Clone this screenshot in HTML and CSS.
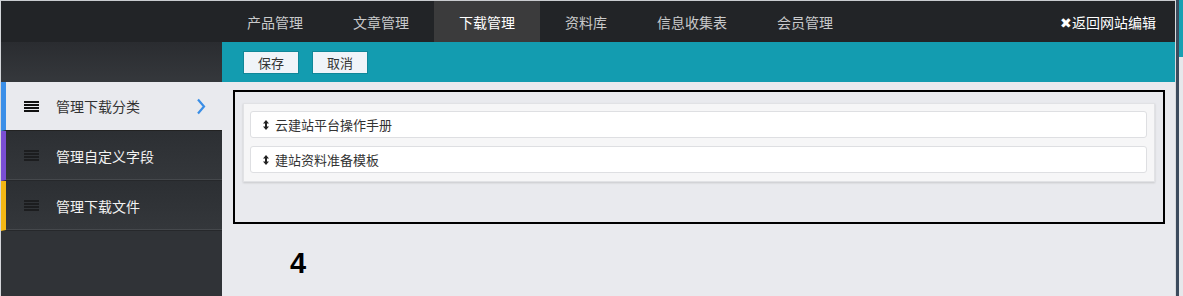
FILE: index.html
```html
<!DOCTYPE html>
<html lang="zh-CN">
<head>
    <meta charset="UTF-8">
    <title>下载管理</title>
    <link rel="stylesheet" href="styles.css">
</head>
<body>
    <div class="screen">
        <div class="page">
            <header class="topbar">
                <ul class="nav-links">
                    <li><a href="#">产品管理</a></li>
                    <li><a href="#">文章管理</a></li>
                    <li class="active"><a href="#">下载管理</a></li>
                    <li><a href="#">资料库</a></li>
                    <li><a href="#">信息收集表</a></li>
                    <li><a href="#">会员管理</a></li>
                </ul>
                <a class="back-link" href="#">✖返回网站编辑</a>
            </header>

            <div class="body-row">
                <aside class="sidebar">
                    <div class="sidebar-top"></div>
                    <ul class="side-menu">
                        <li class="side-item current blue">
                            <span class="list-icon"><i></i><i></i><i></i><i></i></span>
                            <span class="side-text">管理下载分类</span>
                            <svg class="chevron" width="10" height="17" viewBox="0 0 10 17">
                                <path d="M2 1.5 L8 8.5 L2 15.5" fill="none" stroke="#3a8ee6" stroke-width="2.2"/>
                            </svg>
                        </li>
                        <li class="side-item purple">
                            <span class="list-icon"><i></i><i></i><i></i><i></i></span>
                            <span class="side-text">管理自定义字段</span>
                        </li>
                        <li class="side-item yellow">
                            <span class="list-icon"><i></i><i></i><i></i><i></i></span>
                            <span class="side-text">管理下载文件</span>
                        </li>
                    </ul>
                </aside>

                <main class="main">
                    <div class="toolbar">
                        <button class="btn">保存</button>
                        <button class="btn">取消</button>
                    </div>
                    <div class="content">
                        <div class="outline-box">
                            <div class="sort-panel">
                                <div class="sort-row">
                                    <svg class="sort-icon" width="6" height="10" viewBox="0 0 6 10">
                                        <path d="M3 0 L6 3.5 L4 3.5 L4 6.5 L6 6.5 L3 10 L0 6.5 L2 6.5 L2 3.5 L0 3.5 Z" fill="#222"/>
                                    </svg>
                                    云建站平台操作手册
                                </div>
                                <div class="sort-row">
                                    <svg class="sort-icon" width="6" height="10" viewBox="0 0 6 10">
                                        <path d="M3 0 L6 3.5 L4 3.5 L4 6.5 L6 6.5 L3 10 L0 6.5 L2 6.5 L2 3.5 L0 3.5 Z" fill="#222"/>
                                    </svg>
                                    建站资料准备模板
                                </div>
                            </div>
                        </div>
                        <div class="step-num">4</div>
                    </div>
                </main>
            </div>
        </div>

        <div class="edge">
            <div class="edge-line"></div>
            <div class="edge-bar"></div>
            <div class="edge-side">
                <div class="edge-teal"></div>
            </div>
        </div>
    </div>
</body>
</html>
```

FILE: styles.css
```css
html, body {
    margin: 0;
    height: 100%;
}
body {
    font-family: "Noto Sans CJK SC", "Liberation Sans", sans-serif;
    background-color: #e9eaee;
    overflow: hidden;
}
.screen {
    display: flex;
    height: 296px;
}
.page {
    width: 1174px;
    display: flex;
    flex-direction: column;
    border-left: 1px solid #d4d6da;
    border-top: 1px solid #c9cbcf;
    background: #e9eaee;
}
.topbar {
    height: 41px;
    background: #222427;
    display: flex;
    align-items: stretch;
    justify-content: space-between;
}
.nav-links {
    list-style: none;
    margin: 0 0 0 221px;
    padding: 0;
    display: flex;
}
.nav-links li {
    display: flex;
    align-items: center;
    padding: 0 25px;
}
.nav-links a {
    text-decoration: none;
    color: #c9cacb;
    font-size: 14px;
}
.nav-links li.active {
    background: #3b3b3c;
}
.nav-links li.active a {
    color: #fff;
}
.back-link {
    align-self: center;
    margin-right: 19px;
    color: #fff;
    font-size: 14px;
    text-decoration: none;
}
.body-row {
    flex: 1;
    display: flex;
}
.sidebar {
    width: 221px;
    background: #303337;
    display: flex;
    flex-direction: column;
}
.sidebar-top {
    height: 40px;
    background: linear-gradient(#2a2c30, #35383c);
}
.side-menu {
    list-style: none;
    margin: 0;
    padding: 0;
}
.side-item {
    display: flex;
    align-items: center;
    height: 49px;
    border-left: 5px solid transparent;
    border-bottom: 1px solid #26282b;
    background: linear-gradient(#2c2f33, #34373b);
    color: #f2f2f2;
    font-size: 14px;
    box-shadow: inset 0 -1px 0 #45484c;
}
.side-item.current {
    height: 48px;
    background: #e9eaee;
    color: #333;
    border-bottom-color: #222;
    box-shadow: none;
}
.side-item.blue { border-left-color: #3b8fe8; }
.side-item.purple { border-left-color: #7a4ed4; }
.side-item.yellow { border-left-color: #f3b714; }
.list-icon {
    display: flex;
    flex-direction: column;
    gap: 1px;
    margin-left: 18px;
    margin-right: 17px;
    width: 15px;
}
.list-icon i {
    display: block;
    height: 2px;
    background: #1c1d1f;
}
.current .list-icon i {
    background: #111;
}
.side-text {
    flex: 1;
}
.chevron {
    margin-right: 16px;
}
.main {
    flex: 1;
    display: flex;
    flex-direction: column;
}
.toolbar {
    height: 40px;
    background: #139cb0;
    display: flex;
    align-items: center;
    gap: 13px;
    padding-left: 21px;
}
.btn {
    width: 56px;
    height: 23px;
    padding: 0;
    border: 1px solid #0f8799;
    background: #eff4f9;
    color: #333;
    font-family: inherit;
    font-size: 13px;
    cursor: pointer;
}
.content {
    flex: 1;
    padding: 8px 10px 0 11px;
}
.outline-box {
    border: 2px solid #000;
    padding: 11px 8px 40px 8px;
}
.sort-panel {
    background: #f6f6f7;
    border: 1px solid #e1e2e5;
    box-shadow: 0 1px 2px rgba(0, 0, 0, 0.15);
    padding: 7px 7px 8px 6px;
    display: flex;
    flex-direction: column;
    gap: 8px;
}
.sort-row {
    height: 25px;
    background: #fff;
    border: 1px solid #dedfe2;
    border-radius: 3px;
    display: flex;
    align-items: center;
    padding-left: 12px;
    font-size: 13px;
    color: #333;
}
.sort-icon {
    margin-right: 6px;
}
.step-num {
    margin: 23px 0 0 57px;
    font-family: "Liberation Sans", Arial, sans-serif;
    font-weight: bold;
    font-size: 29px;
    line-height: 32px;
    color: #000;
}
.edge {
    flex: 1;
    display: flex;
}
.edge-line {
    width: 1px;
    background: #d8dadd;
}
.edge-bar {
    width: 3px;
    background: #3c4b5d;
}
.edge-side {
    flex: 1;
    background: #e6e8eb;
}
.edge-teal {
    height: 57px;
    background: #18a0b2;
}
```
